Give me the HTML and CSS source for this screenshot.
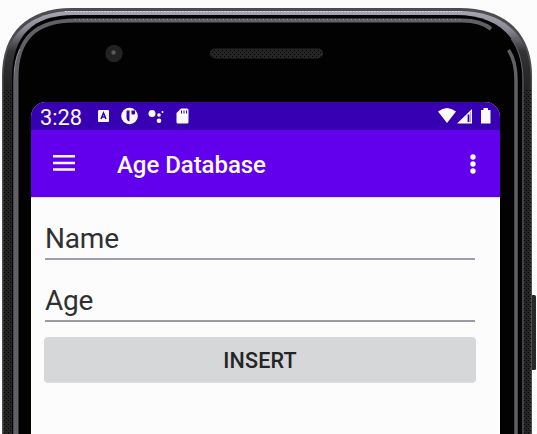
FILE: index.html
```html
<!DOCTYPE html>
<html lang="en">
<head>
<meta charset="utf-8">
<title>Age Database</title>
<link rel="stylesheet" href="styles.css">
</head>
<body>
<main class="phone">
  <svg class="shell" viewBox="0 0 537 434" aria-hidden="true">
    <defs>
      <linearGradient id="metal" gradientUnits="userSpaceOnUse" x1="0" y1="10" x2="0" y2="85">
        <stop offset="0" stop-color="#aaa8b5"/><stop offset=".25" stop-color="#8c8a96"/><stop offset=".55" stop-color="#343436"/><stop offset="1" stop-color="#242425"/>
      </linearGradient>
      <pattern id="grain" width="4" height="4" patternUnits="userSpaceOnUse">
        <path d="M0 0h1v1H0zM2 2h1v1H2z" fill="#000"/>
      </pattern>
    </defs>
    <rect x="530" y="295" width="6" height="75" rx="1.5" fill="#29292a"/>
    <path d="M2 440V76C2 32 28 8 72 8H460C504 8 532 32 532 76V440Z" fill="#4c4c4e"/>
    <path d="M3.500 440V77C3.500 34 31 11 73 11H459C502 11 530.500 34 530.500 77V440Z" fill="url(#metal)"/>
    <path d="M3 440V90H12V440ZM524 440V90H531V440Z" fill="url(#grain)"/>
    <path d="M12 440V78C12 35 33 15 74 15H456C499 15 522 38 522 78V440Z" fill="#020202"/>
    <path d="M523 440V80C523 64 519 49 511 39" fill="none" stroke="#626266"/>
    <path d="M16.500 440V78C16.500 38 36 20.500 75 20.500H462Q481 20.500 491 29" fill="none" stroke="#606065" stroke-width="4"/>
    <path d="M14 440V79Q14 60 20 49" fill="none" stroke="#92909d"/>
    <path d="M508.500 50Q516 61 516 80V440" fill="none" stroke="#606065" stroke-width="3.500"/>
    <path d="M75 19.500H460" stroke="#918f9b" stroke-dasharray="1 3"/>
    <path d="M65 11.500H462" stroke="#d2d1da" stroke-dasharray="2 1"/>
    <circle cx="114" cy="53.500" r="8.700" fill="#222"/>
    <circle cx="113.500" cy="52.500" r="2.200" fill="#59595d"/>
    <circle cx="111.500" cy="52" r=".7" fill="#3b218f"/>
    <rect x="210" y="48.500" width="113" height="10" rx="5" fill="#262626"/>
    <rect x="211" y="49" width="111" height="9" rx="4.500" fill="url(#grain)"/>
  </svg>
  <section class="screen">
    <header class="status">
      <span class="clock">3:28</span>
      <svg class="notices" viewBox="0 0 94 20" aria-hidden="true">
        <rect x="1" y="4" width="11" height="12" rx="1" fill="#fbfbfb"/>
        <path d="M4 13L6.500 7L9 13M5 11h3" fill="none" stroke="#3700b3" stroke-width="1.500"/>
        <circle cx="32.500" cy="10" r="8.300" fill="#fbfbfb"/>
        <path d="M30 4.500H32.500V15.500Q29.500 14.500 29.500 11.500V5Z" fill="#3700b3"/>
        <path d="M34.500 4.500H38V8Q36 9 34.500 8Z" fill="#3700b3"/>
        <circle cx="55" cy="7.500" r="3.500" fill="#fbfbfb"/><circle cx="62" cy="9" r="1.800" fill="#fbfbfb"/><circle cx="62" cy="14.800" r="2.300" fill="#fbfbfb"/><circle cx="65.500" cy="6" r="1" fill="#fbfbfb"/>
        <path d="M84 2.500H90Q91.500 2.500 91.500 4V16Q91.500 17.500 90 17.500H81Q79.500 17.500 79.500 16V7Z" fill="#fbfbfb"/>
        <path d="M84.500 4.500v3M87 4.500v3M89.500 4.500v3" stroke="#3700b3"/>
      </svg>
      <svg class="signals" viewBox="0 0 54 20" aria-hidden="true">
        <path d="M1 5.500Q10-1.500 19 5.500L10 17Z" fill="#fbfbfb"/>
        <path d="M20 17.500L35 3V17.500Z" fill="#fbfbfb"/><path d="M31.500 8.500V16" stroke="#3700b3" stroke-width="1.800"/><path d="M33.500 6V16" stroke="#b0a0d8"/>
        <path d="M44 4H46.500V2H51V4H53.500V17.500H44Z" fill="#fbfbfb"/>
      </svg>
    </header>
    <div class="appbar">
      <svg class="menu" viewBox="0 0 22 16" aria-hidden="true"><path d="M0 1.250H22M0 8H22M0 14.500H22" stroke="#fbfbfb" stroke-width="2.500"/></svg>
      <h1>Age Database</h1>
      <svg class="more" viewBox="0 0 6 20" aria-hidden="true"><g fill="#fbfbfb"><circle cx="3" cy="3" r="2.700"/><circle cx="3" cy="10" r="2.700"/><circle cx="3" cy="17" r="2.700"/></g></svg>
    </div>
    <form class="form">
      <div class="field name">Name</div>
      <div class="field age">Age</div>
      <button class="insert" type="button">INSERT</button>
    </form>
  </section>
</main>
</body>
</html>
```
FILE: styles.css
```css
* { box-sizing: border-box; }
body { margin: 0; background: #fcfcfc; font-family: Roboto, "Liberation Sans", sans-serif; overflow: hidden; }
.phone { position: relative; width: 537px; height: 434px; padding: 102px 37px 0 31px; overflow: hidden; }
.shell { position: absolute; inset: 0; width: 537px; height: 434px; }
.screen { position: relative; height: 332px; background: #fcfcfc; border-radius: 15px 15px 0 0; overflow: hidden; }
.status { height: 28px; background: #3700b3; display: flex; align-items: center; padding: 0 9px; color: #fbfbfb; }
.clock { width: 57px; font-size: 21.8px; line-height: 28px; padding-top: 3px; white-space: nowrap; }
.notices { width: 94px; height: 20px; }
.signals { width: 54px; height: 20px; margin-left: auto; }
.appbar { height: 67px; background: #6200ee; display: flex; align-items: center; padding: 0 24px 0 22px; color: #fbfbfb; }
.menu { width: 22px; height: 16px; margin-bottom: 1px; }
.appbar h1 { margin: 3px 0 0 42px; font-size: 24px; line-height: 30px; font-weight: 500; white-space: nowrap; letter-spacing: -0.05px; }
.more { width: 6px; height: 20px; margin-left: auto; }
.form { border-top: 1px solid #dddde2; padding: 0 25px 0 13px; display: flex; flex-direction: column; }
.field { height: 62px; border-bottom: 2px solid #a09daf; color: #303033; font-size: 28px; line-height: 34px; padding: 24px 0 0; margin-left: 1px; letter-spacing: -0.2px; }
.age { border-color: #9c9aaa; }
.insert { margin: 15px -1px 0 0; height: 46px; border: 0; border-bottom: 1px solid #dcdddf; border-radius: 4px; padding: 2px 0 0; background: #d6d7d9; color: #242426; font: 500 21.5px/30px Roboto, sans-serif; letter-spacing: 0.15px; }
```
